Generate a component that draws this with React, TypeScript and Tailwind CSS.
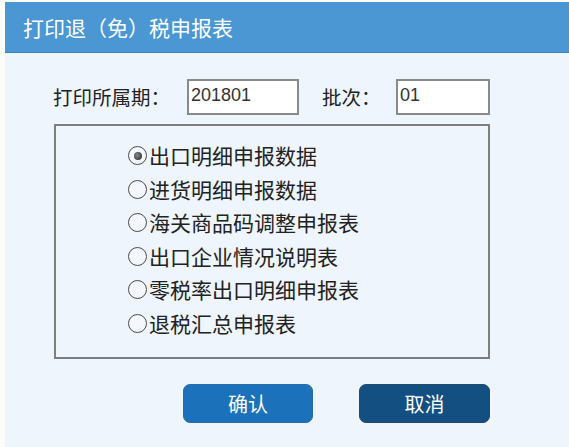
import React from "react";

const items = [
  "出口明细申报数据",
  "进货明细申报数据",
  "海关商品码调整申报表",
  "出口企业情况说明表",
  "零税率出口明细申报表",
  "退税汇总申报表",
];

function Radio({ checked }: { checked: boolean }) {
  return (
    <span className="w-[19px] h-[19px] rounded-full border-[1.5px] border-[#4a4a4a] bg-[#f4f8fc] flex items-center justify-center shrink-0">
      {checked && (
        <span className="w-[8px] h-[8px] rounded-full bg-[radial-gradient(circle_at_40%_40%,#8a8a8a,#1e1e1e)]" />
      )}
    </span>
  );
}

export default function App() {
  const cjk = { fontFamily: '"Noto Sans CJK SC", "Noto Sans", sans-serif' };
  return (
    <div className="w-[569px] h-[447px] bg-[#fdfdf8] pl-[5px] pt-[2px] flex overflow-hidden" style={cjk}>
      <div className="flex-1 flex flex-col bg-[#eef5fd]">
        <div className="h-[51px] bg-[#4a97d3] border-b border-[#3b82bd] flex items-center pl-[18px] text-white text-[21px] leading-none">
          打印退（免）税申报表
        </div>
        <div className="flex items-center mt-[26px] pl-[48px] text-[19.5px] text-[#222] leading-none">
          <div className="w-[134px]">打印所属期：</div>
          <div
            className="w-[112px] h-[36px] bg-white border-2 border-[#8a8a8a] pl-[2px] pt-[5px] text-[18px] text-[#333] leading-none"
            style={{ fontFamily: '"Liberation Sans", Arial, sans-serif' }}
          >
            201801
          </div>
          <div className="w-[74px] ml-[23px]">批次：</div>
          <div
            className="w-[94px] h-[36px] bg-white border-2 border-[#8a8a8a] pl-[2px] pt-[5px] text-[18px] text-[#333] leading-none"
            style={{ fontFamily: '"Liberation Sans", Arial, sans-serif' }}
          >
            01
          </div>
        </div>
        <div className="ml-[49px] mt-[9px] w-[436px] h-[235px] border-2 border-[#7e7e7e] pl-[72px] pt-[13px] flex flex-col">
          {items.map((t, i) => (
            <div key={t} className="h-[33.5px] flex items-center gap-[2px] text-[21px] text-[#222] leading-none">
              <Radio checked={i === 0} />
              <span>{t}</span>
            </div>
          ))}
        </div>
        <div className="flex mt-[25px] pl-[178px] gap-[46px]">
          <button className="w-[130px] h-[39px] rounded-[7px] bg-[#1b72bb] border border-[#2a6aa5] text-white text-[20px] leading-none flex items-center justify-center">
            确认
          </button>
          <button className="w-[131px] h-[39px] rounded-[7px] bg-[#134f80] border border-[#214a6e] text-white text-[20px] leading-none flex items-center justify-center">
            取消
          </button>
        </div>
      </div>
    </div>
  );
}
